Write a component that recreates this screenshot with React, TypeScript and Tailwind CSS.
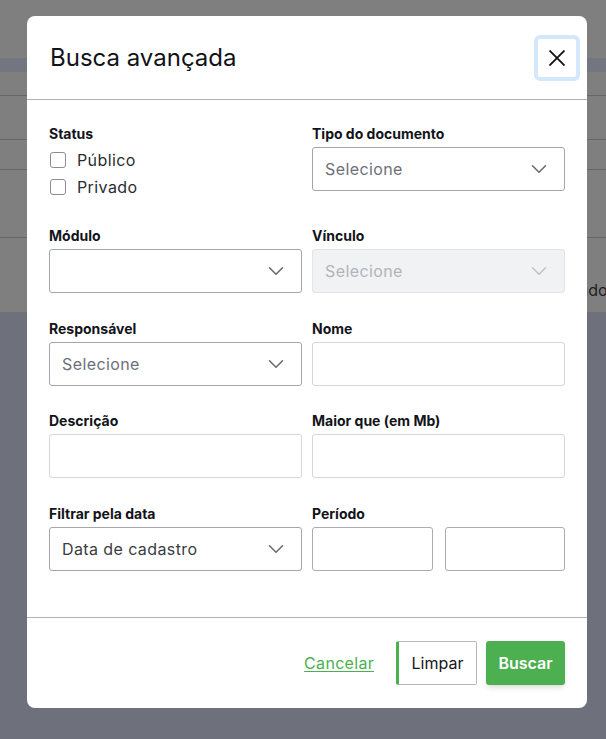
import { ChevronDown } from "lucide-react";

const Label = ({ children }: { children: string }) => (
  <div className="mb-[3px] h-5 text-sm leading-5 font-bold text-[#12141a]">{children}</div>
);

const Select = ({
  value,
  tone = "placeholder",
  disabled = false,
}: {
  value?: string;
  tone?: "placeholder" | "value";
  disabled?: boolean;
}) => (
  <div
    className={
      disabled
        ? "flex h-11 items-center justify-between rounded-[3px] border border-[#e2e4e8] bg-[#f1f2f4] pr-3 pl-3 text-base tracking-[0.4px]"
        : "flex h-11 items-center justify-between rounded-[3px] border border-[#a3a5ae] bg-white pr-3 pl-3 text-base tracking-[0.4px]"
    }
  >
    <span
      className={
        disabled ? "text-[#b2b4ba]" : tone === "value" ? "text-[#3a3c42]" : "text-[#6d7079]"
      }
    >
      {value}
    </span>
    <ChevronDown
      size={26}
      strokeWidth={1.5}
      className={disabled ? "text-[#c2c4ca]" : "text-[#6b6e76]"}
    />
  </div>
);

const Input = ({ dark = false }: { dark?: boolean }) => (
  <div
    className={
      dark
        ? "h-11 rounded-[3px] border border-[#a9abb5] bg-white"
        : "h-11 rounded-[3px] border border-[#d3d6dc] bg-white"
    }
  />
);

const Check = ({ label }: { label: string }) => (
  <div className="flex h-[26.5px] items-center gap-[11px]">
    <span className="ml-px h-4 w-4 rounded-[3px] border border-[#8a8d96] bg-white" />
    <span className="text-base tracking-[0.4px] text-[#2a2c31]">{label}</span>
  </div>
);

export default function App() {
  return (
    <div
      className="relative h-[739px] w-[606px] overflow-hidden bg-[#6e717b]"
      style={{ fontFamily: "Inter, 'Noto Sans', sans-serif" }}
    >
      {/* page behind the overlay */}
      <div className="bg-[#7f7f7f]">
        <div className="h-[58px]" />
        <div className="h-[14px] bg-[#737680]" />
        <div className="h-[24px] border-b border-[#666666]" />
        <div className="h-[44px] border-b border-[#666666]" />
        <div className="h-[30px] border-b border-[#666666]" />
        <div className="h-[68px] border-b border-[#666666]" />
        <div className="flex h-[74px] items-center pt-[30px] pl-[550px] text-base whitespace-nowrap text-[#1e1e1e]">
          Privado
        </div>
      </div>

      {/* modal */}
      <div className="absolute top-[16px] left-[27px] w-[560px] rounded-lg bg-white">
        <div className="flex h-[84px] items-center justify-between border-b border-[#b0b2ba] pr-[7px] pl-[23px]">
          <h2 className="text-[24px] text-[#111318]">Busca avançada</h2>
          <button className="flex h-[46px] w-[46px] items-center justify-center rounded-[6px] border-[4px] border-[#d3e8fb] bg-white">
            <svg width="16" height="16" viewBox="0 0 16 16" fill="none" stroke="#111" strokeWidth="1.8">
              <path d="M0.5 0.5 15.5 15.5M15.5 0.5 0.5 15.5" />
            </svg>
          </button>
        </div>

        <div className="grid grid-cols-2 gap-x-[10px] gap-y-[26px] px-[22px] pt-6 pb-[46px]">
          <div>
            <Label>Status</Label>
            <Check label="Público" />
            <Check label="Privado" />
          </div>
          <div>
            <Label>Tipo do documento</Label>
            <Select value="Selecione" />
          </div>

          <div>
            <Label>Módulo</Label>
            <Select />
          </div>
          <div>
            <Label>Vínculo</Label>
            <Select value="Selecione" disabled />
          </div>

          <div>
            <Label>Responsável</Label>
            <Select value="Selecione" />
          </div>
          <div>
            <Label>Nome</Label>
            <Input />
          </div>

          <div className="-mt-px">
            <Label>Descrição</Label>
            <Input />
          </div>
          <div className="-mt-px">
            <Label>Maior que (em Mb)</Label>
            <Input />
          </div>

          <div>
            <Label>Filtrar pela data</Label>
            <Select value="Data de cadastro" tone="value" />
          </div>
          <div>
            <Label>Período</Label>
            <div className="grid grid-cols-2 gap-3">
              <Input dark />
              <Input dark />
            </div>
          </div>
        </div>

        <div className="flex items-center justify-end border-t border-[#b0b2ba] pt-[23px] pb-[23px] pr-[22px]">
          <a className="mr-[22px] text-base tracking-[0.3px] text-[#4caf50] underline underline-offset-2">
            Cancelar
          </a>
          <button className="h-11 w-[81px] rounded-[2px] border border-l-[3px] border-[#b5b7c0] border-l-[#4caf50] bg-white text-base text-[#14161b]">
            Limpar
          </button>
          <button className="ml-[9px] h-11 w-[79px] rounded-[3px] bg-[#4caf50] text-base font-semibold text-white shadow-md">
            Buscar
          </button>
        </div>
      </div>
    </div>
  );
}
